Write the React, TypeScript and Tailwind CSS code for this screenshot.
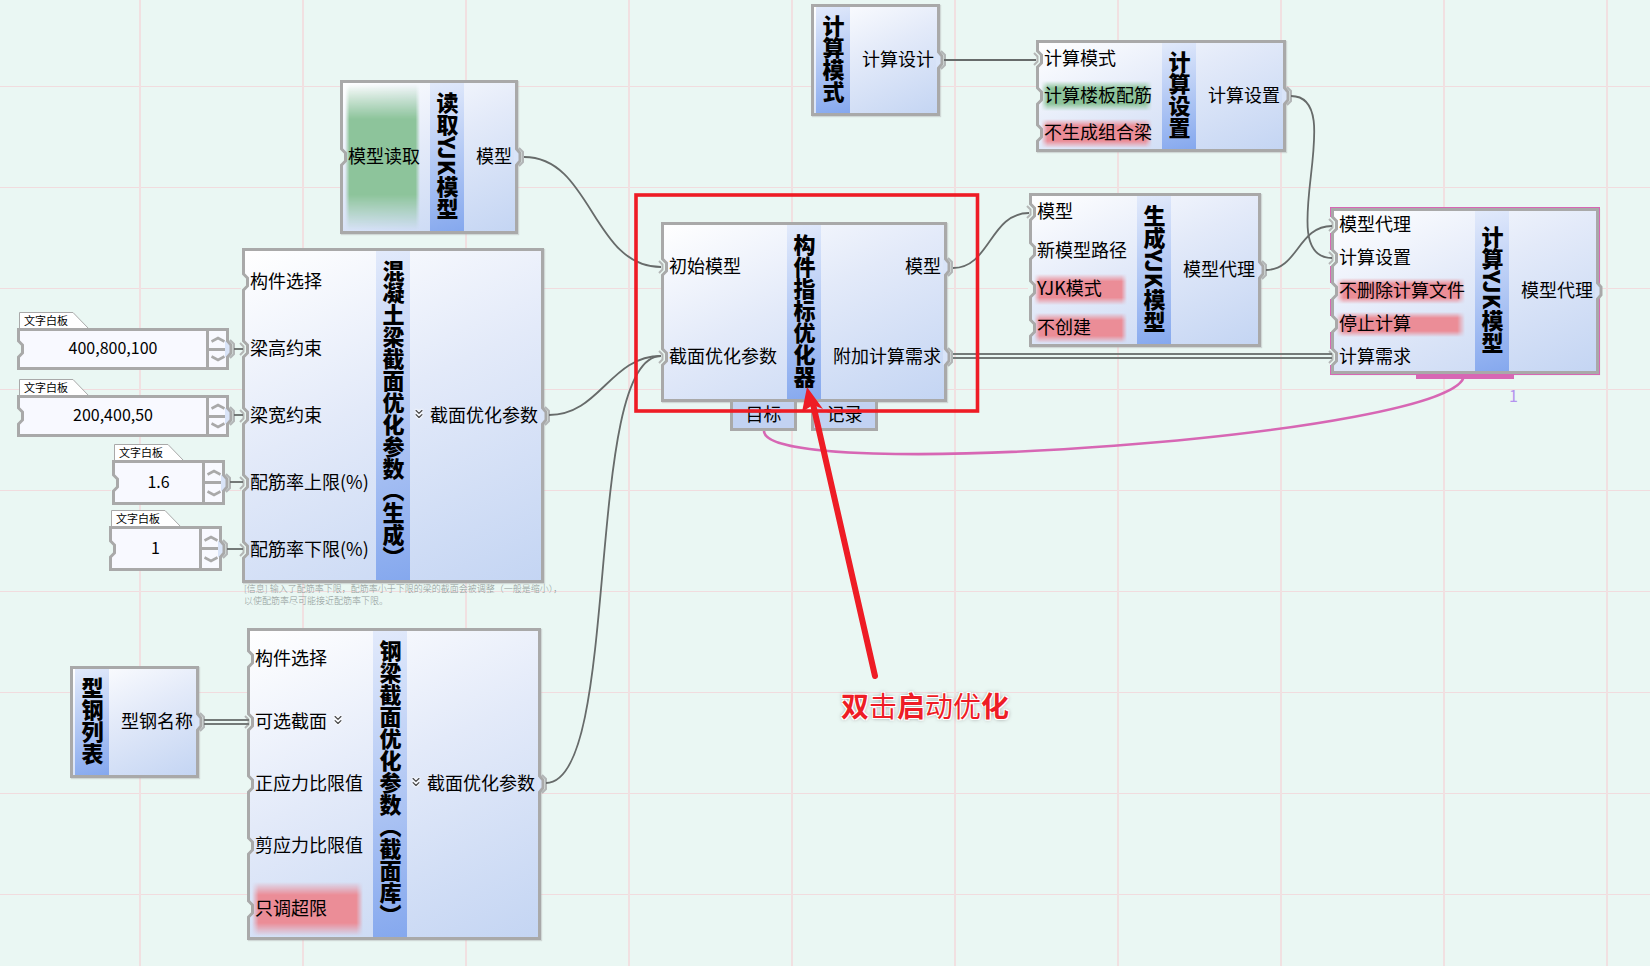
import React from "react";
import { ChevronsDown } from "lucide-react";

type Port = {
  label: string;
  linked?: boolean;
  tone?: "green" | "red";
  expandable?: boolean;
};

type NodeSpec = {
  title: string;
  place: string;
  inputWidth: string;
  inputs: Port[];
  outputs: Port[];
  selected?: boolean;
};

const nodes: NodeSpec[] = [
  {
    title: "计算模式",
    place: "left-[811px] top-[4px] w-[129px] h-[112px]",
    inputWidth: "w-[2px]",
    inputs: [],
    outputs: [{ label: "计算设计", linked: true }],
  },
  {
    title: "计算设置",
    place: "left-[1036px] top-[40px] w-[250px] h-[112px]",
    inputWidth: "w-[123px]",
    inputs: [
      { label: "计算模式", linked: true },
      { label: "计算楼板配筋", tone: "green" },
      { label: "不生成组合梁", tone: "red" },
    ],
    outputs: [{ label: "计算设置", linked: true }],
  },
  {
    title: "读取YJK模型",
    place: "left-[340px] top-[80px] w-[178px] h-[154px]",
    inputWidth: "w-[87px]",
    inputs: [{ label: "模型读取", tone: "green" }],
    outputs: [{ label: "模型", linked: true }],
  },
  {
    title: "生成YJK模型",
    place: "left-[1029px] top-[193px] w-[232px] h-[154px]",
    inputWidth: "w-[105px]",
    inputs: [
      { label: "模型", linked: true },
      { label: "新模型路径" },
      { label: "YJK模式", tone: "red" },
      { label: "不创建", tone: "red" },
    ],
    outputs: [{ label: "模型代理", linked: true }],
  },
  {
    title: "计算YJK模型",
    place: "left-[1331px] top-[208px] w-[268px] h-[166px]",
    inputWidth: "w-[141px]",
    inputs: [
      { label: "模型代理", linked: true },
      { label: "计算设置", linked: true },
      { label: "不删除计算文件", tone: "red" },
      { label: "停止计算", tone: "red" },
      { label: "计算需求", linked: true },
    ],
    outputs: [{ label: "模型代理" }],
    selected: true,
  },
  {
    title: "构件指标优化器",
    place: "left-[661px] top-[222px] w-[286px] h-[180px]",
    inputWidth: "w-[123px]",
    inputs: [
      { label: "初始模型", linked: true },
      { label: "截面优化参数", linked: true },
    ],
    outputs: [
      { label: "模型", linked: true },
      { label: "附加计算需求", linked: true },
    ],
  },
  {
    title: "混凝土梁截面优化参数（生成）",
    place: "left-[242px] top-[248px] w-[302px] h-[335px]",
    inputWidth: "w-[131px]",
    inputs: [
      { label: "构件选择" },
      { label: "梁高约束", linked: true },
      { label: "梁宽约束", linked: true },
      { label: "配筋率上限(%)", linked: true },
      { label: "配筋率下限(%)", linked: true },
    ],
    outputs: [{ label: "截面优化参数", linked: true, expandable: true }],
  },
  {
    title: "钢梁截面优化参数（截面库）",
    place: "left-[247px] top-[628px] w-[294px] h-[312px]",
    inputWidth: "w-[123px]",
    inputs: [
      { label: "构件选择" },
      { label: "可选截面", linked: true, expandable: true },
      { label: "正应力比限值" },
      { label: "剪应力比限值" },
      { label: "只调超限", tone: "red" },
    ],
    outputs: [{ label: "截面优化参数", linked: true, expandable: true }],
  },
  {
    title: "型钢列表",
    place: "left-[70px] top-[666px] w-[129px] h-[112px]",
    inputWidth: "w-[2px]",
    inputs: [],
    outputs: [{ label: "型钢名称", linked: true }],
  },
];

const boards = [
  { id: "beam-height", value: "400,800,100", place: "left-[17px] top-[312px] w-[212px]", box: "h-[42px]" },
  { id: "beam-width", value: "200,400,50", place: "left-[17px] top-[379px] w-[212px]", box: "h-[42px]" },
  { id: "ratio-max", value: "1.6", place: "left-[112px] top-[444px] w-[113px]", box: "h-[45px]" },
  { id: "ratio-min", value: "1", place: "left-[109px] top-[510px] w-[113px]", box: "h-[45px]" },
];

const wires = [
  "M524 157 C592 157 592 267 661 267",
  "M549 415 C600 415 610 356 661 356",
  "M546 783 C622 783 583 356 661 356",
  "M953 268 C990 268 990 213 1029 213",
  "M944 60 H1036",
  "M1291 96 C1350 96 1271 258 1332 258",
  "M1266 270 C1298 270 1298 226 1332 226",
  "M234 349 H243",
  "M234 415 H243",
  "M230 482 H243",
  "M227 549 H243",
];

const doubleWires = ["M953 354 H1332", "M953 358 H1332", "M204 720 H249", "M204 724 H249"];

function InputPort({ linked }: { linked?: boolean }) {
  return (
    <svg className="absolute top-1/2 -left-[7px] -mt-[10px] h-5 w-[14px]" viewBox="0 0 14 20" fill="none" aria-hidden="true">
      <path d="M3 2 H7 L9 6 V15 L7 18 H3 Z" fill="#eaf7f3" />
      <path d="M5.5 0 V2 L9.5 6 V14 L5.5 18 V20" stroke="#a9a9a9" strokeWidth="3" />
      {linked && <path d="M2 4 L5.5 7.5 V12.5 L2 16" stroke="#b4b7b6" strokeWidth="2" />}
    </svg>
  );
}

function OutputPort({ linked }: { linked?: boolean }) {
  return (
    <svg className="absolute top-1/2 -right-[10px] -mt-[10px] h-5 w-[14px]" viewBox="0 0 14 20" fill="none" aria-hidden="true">
      <path d="M3 2 H6 L9 6 V15 L6 18 H3 Z" fill="#d9e4f8" />
      <path d="M5.5 0 V2 L9 6 V14 L5.5 18 V20" stroke="#a9a9a9" strokeWidth="3" />
      {linked && <path d="M8 1 L12 5 V15 L8 19" stroke="#b2b5b6" strokeWidth="2" />}
    </svg>
  );
}

function Expander() {
  return (
    <ChevronsDown
      size={14}
      strokeWidth={2}
      className="text-[#444] [filter:drop-shadow(0_0_1px_#fff)_drop-shadow(0_0_1px_#fff)]"
      aria-hidden="true"
    />
  );
}

function GraphNode({ node }: { node: NodeSpec }) {
  return (
    <section
      className={`absolute flex border-[3px] border-[#a9a9a9] bg-linear-[155deg,#ffffff_0%,#e3eaf9_45%,#c4d5f3_100%] shadow-[1px_1px_1px_#a9a9a966] ${node.selected ? "outline-1 outline-[#d767b4]" : ""} ${node.place}`}
    >
      <div className={`-my-[3px] flex shrink-0 flex-col ${node.inputWidth}`}>
        {node.inputs.map((port) => (
          <div key={port.label} className="relative flex flex-1 items-center gap-1 pb-1 pl-[5px]">
            {port.tone && (
              <span
                className={`absolute inset-y-1 right-[10px] left-[2px] mask-x-from-94% mask-y-from-76% ${port.tone === "green" ? "bg-[#8dc49b]" : "bg-[#eb8d97]"}`}
              />
            )}
            <InputPort linked={port.linked} />
            <span className="relative whitespace-nowrap">{port.label}</span>
            {port.expandable && <Expander />}
          </div>
        ))}
      </div>
      <h2 className="flex w-[34px] shrink-0 items-center justify-center bg-linear-[165deg,#e2eafb,#85a8ee] pb-[3px] pl-px text-[22px] leading-none font-black whitespace-nowrap [writing-mode:vertical-rl]">
        {node.title}
      </h2>
      <div className="-my-[3px] flex flex-1 flex-col">
        {node.outputs.map((port) => (
          <div key={port.label} className="relative flex flex-1 items-center justify-end gap-1 pr-[3px] pb-1">
            {port.expandable && <Expander />}
            <span className="whitespace-nowrap">{port.label}</span>
            <OutputPort linked={port.linked} />
          </div>
        ))}
      </div>
    </section>
  );
}

function Board({ board }: { board: (typeof boards)[number] }) {
  return (
    <div className={`absolute ${board.place}`}>
      <label htmlFor={board.id} className="relative ml-[2px] flex h-4 w-[72px] items-center pl-[5px] text-[11px] leading-none">
        <svg className="absolute inset-0 h-4 w-[72px]" viewBox="0 0 72 16" aria-hidden="true">
          <path d="M0.5 17 V0.5 H54 L70 17" fill="#fff" stroke="#a9a9a9" />
        </svg>
        <span className="relative">文字白板</span>
      </label>
      <div className={`relative flex border-[3px] border-[#a9a9a9] bg-[#f8f9ff] ${board.box}`}>
        <input
          id={board.id}
          defaultValue={board.value}
          className="w-0 min-w-0 flex-1 bg-transparent pb-1 text-center text-base outline-none"
        />
        <div className="flex w-[20px] flex-col divide-y-[3px] divide-[#a9a9a9] border-l-[3px] border-[#a9a9a9]">
          <button type="button" aria-label="增加" className="flex flex-1 items-center justify-center">
            <svg className="h-[7px] w-[14px]" viewBox="0 0 14 7" fill="none" stroke="#a9a9a9" strokeWidth="2.6">
              <path d="M0.5 5.5 L7 2 L13.5 5.5" />
            </svg>
          </button>
          <button type="button" aria-label="减少" className="flex flex-1 items-center justify-center">
            <svg className="h-[7px] w-[14px]" viewBox="0 0 14 7" fill="none" stroke="#a9a9a9" strokeWidth="2.6">
              <path d="M0.5 1.5 L7 5 L13.5 1.5" />
            </svg>
          </button>
        </div>
        <InputPort />
        <OutputPort linked />
      </div>
    </div>
  );
}

export default function App() {
  return (
    <main className="relative min-h-screen w-full overflow-hidden bg-[#eaf7f3] bg-[linear-gradient(to_right,#f1e0e1_2px,transparent_2px),linear-gradient(to_bottom,#f1dcde_1px,transparent_1px)] bg-size-[163px_101px] bg-position-[139px_86px] font-['Noto_Sans_CJK_SC',sans-serif] text-[18px] leading-none text-black">
      {nodes.map((node) => (
        <GraphNode key={node.title} node={node} />
      ))}
      {boards.map((board) => (
        <Board key={board.id} board={board} />
      ))}

      <p className="absolute top-[583px] left-[244px] w-[322px] text-[9px] leading-3 font-light text-[#8f9997]">
        [信息] 输入了配筋率下限，配筋率小于下限的梁的截面会被调整（一般是缩小），
        <br />
        以使配筋率尽可能接近配筋率下限。
      </p>

      <button type="button" className="absolute top-[399px] left-[730px] flex h-8 w-[67px] items-center justify-center border-[3px] border-[#a9a9a9] bg-[#c2d2f2] pb-1">
        目标
      </button>
      <button type="button" className="absolute top-[399px] left-[811px] flex h-8 w-[67px] items-center justify-center border-[3px] border-[#a9a9a9] bg-[#c2d2f2] pb-1">
        记录
      </button>

      <div className="absolute top-[375px] left-[1416px] h-1 w-[98px] bg-[#d767b4]" />
      <span className="absolute top-[387px] left-[1509px] text-base leading-none text-[#b493ee]">1</span>

      <svg className="pointer-events-none absolute top-0 left-0 h-[966px] w-[1650px]" viewBox="0 0 1650 966" fill="none" aria-hidden="true">
        <g stroke="#676b6a" strokeWidth="1.8">
          {wires.map((d) => (
            <path key={d} d={d} />
          ))}
        </g>
        <g stroke="#747a78" strokeWidth="1.8">
          {doubleWires.map((d) => (
            <path key={d} d={d} />
          ))}
        </g>
        <path d="M764 431 C764 485 1464 435 1464 375" stroke="#d767b4" strokeWidth="2.6" />
        <rect x="636" y="195" width="341.5" height="216" stroke="#ee1c25" strokeWidth="3.6" />
        <path d="M875 676 L813 404" stroke="#ee1c25" strokeWidth="6" strokeLinecap="round" />
        <path d="M807 387 L823 409 L813 405 L802 412 Z" fill="#ee1c25" />
      </svg>

      <p className="absolute top-[691px] left-[841px] text-[28px] leading-none font-normal whitespace-nowrap text-[#ee1c25] [text-shadow:1px_1px_0_#fff,-1px_-1px_0_#fff,1px_-1px_0_#fff,-1px_1px_0_#fff,0_0_4px_#777]">
        <b>双</b>击<b>启</b>动优<b>化</b>
      </p>
    </main>
  );
}
